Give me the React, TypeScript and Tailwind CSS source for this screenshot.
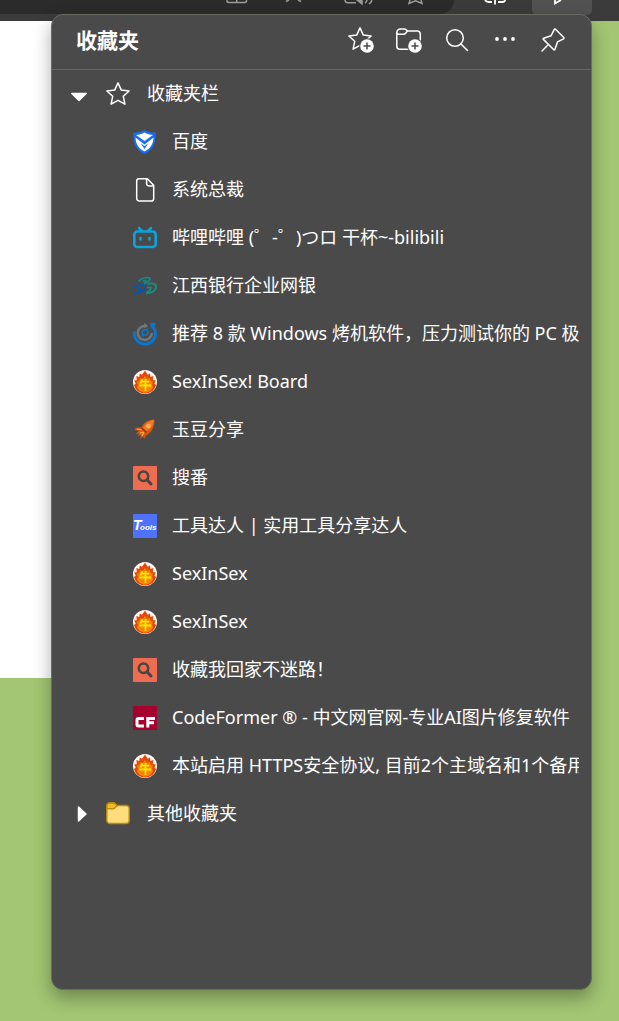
import type { ReactNode } from "react";

const stroke = {
  fill: "none",
  stroke: "#fff",
  strokeWidth: 1.5,
  strokeLinejoin: "round" as const,
  strokeLinecap: "round" as const,
};

function Svg({ children, className = "size-6" }: { children: ReactNode; className?: string }) {
  return (
    <svg viewBox="0 0 24 24" className={`${className} block shrink-0`} aria-hidden="true">
      {children}
    </svg>
  );
}

const STAR = "M12 .9l3.3 7.2 7.8.9-5.8 5.3 1.6 7.9L12 18.3l-6.9 3.9 1.6-7.9L.9 9l7.8-.9z";

const Star = () => (
  <Svg>
    <path d={STAR} {...stroke} />
  </Svg>
);

function PlusBadge() {
  return (
    <>
      <circle cx="19" cy="19" r="7.8" fill="#4a4a4a" />
      <circle cx="19" cy="19" r="6.8" fill="#fff" />
      <path d="M19 15.500v7M15.500 19h7" stroke="#4a4a4a" strokeWidth="1.500" />
    </>
  );
}

const AddStar = () => (
  <svg viewBox="0 0 26 26" className="block size-[26px] shrink-0" aria-hidden="true">
    <path d={STAR} {...stroke} />
    <PlusBadge />
  </svg>
);

const AddFolder = () => (
  <svg viewBox="0 0 26 26" className="block size-[26px] shrink-0" aria-hidden="true">
    <path
      d="M.8 5.500A3.500 3.500 0 0 1 4.300 2h4.200c1.500 0 2.300 2 3.500 2h9.300a3 3 0 0 1 3 3v12.300a3 3 0 0 1-3 3H3.800a3 3 0 0 1-3-3zM.9 5.500c0 1 1 1.800 2 1.800h5.200c1.800 0 2.400-3.300 3.900-3.300"
      {...stroke}
    />
    <PlusBadge />
  </svg>
);

const Search = () => (
  <Svg>
    <circle cx="10" cy="10" r="8.300" {...stroke} />
    <path d="M16 16l6.500 6.500" {...stroke} />
  </Svg>
);

const More = () => (
  <Svg>
    <g fill="#fff">
      <circle cx="4" cy="11" r="1.900" />
      <circle cx="12" cy="11" r="1.900" />
      <circle cx="20" cy="11" r="1.900" />
    </g>
  </Svg>
);

const Pin = () => (
  <Svg>
    <path
      d="M14.500 1.200l8.300 8.300c.4.500.3 1-.2 1.300l-6.100 3.100-2.600 7.600c-.2.500-.7.600-1.100.2L2.400 11.400c-.4-.4-.3-.9.2-1.100l7.500-2.600 3.100-6.100c.3-.6.9-.8 1.300-.4zM7.400 16.500L1 23"
      {...stroke}
    />
  </Svg>
);

const Shield = () => (
  <Svg>
    <path d="M11.500 0C8 2 4 2.500.3 2.500c0 9 .8 17 11.200 21.500 10-4.500 11.200-12.500 11.200-21.500C19 2.500 15 2 11.500 0z" fill="#1a6df0" />
    <path d="M11.500 2.500C9 4.300 6 4.800 3 5l8.500 6L20 5c-3-.2-6-.7-8.500-2.500z" fill="#fff" />
    <path d="M2.500 7.500l9 7 9-7c-.2 6.500-3 11-9 14-6-3-8.800-7.500-9-14z" fill="#fff" />
    <path d="M7.500 13l4 3.200 4-3.200-4 6z" fill="#1a6df0" />
  </Svg>
);

const Doc = () => (
  <Svg>
    <path
      d="M6 .8h8.300L20.700 7.300v13.200a2.600 2.600 0 0 1-2.600 2.600H6.300a2.600 2.600 0 0 1-2.600-2.600V3.200A2.400 2.400 0 0 1 6 .8zM13.600 1v4.600a2.300 2.300 0 0 0 2.300 2.300h4.600"
      {...stroke}
    />
  </Svg>
);

const Bili = () => (
  <Svg>
    <g fill="none" stroke="#0fa3dc" strokeLinecap="round">
      <path d="M6 2l3 3M18 2l-3 3" strokeWidth="2.500" />
      <rect x="1.300" y="5.500" width="21.400" height="15.500" rx="3" strokeWidth="2.600" />
      <path d="M7.500 12v1.500M16.500 12v1.500" strokeWidth="2.500" />
    </g>
  </Svg>
);

const Bank = () => (
  <Svg>
    <g fill="none">
      <path d="M5.500 7.500C8 4.500 14 2.500 16.500 4c1.500 1.500-1 4-4.500 5" stroke="#158e86" strokeWidth="1.600" />
      <path d="M9.500 7h3.500l-2 3.500H8" stroke="#158e86" strokeWidth="1.500" />
      <path d="M14.500 10.500c4-2 8.500-1 8.500 2.500s-4.500 6.500-10 6.500" stroke="#158e86" strokeWidth="1.800" />
      <path d="M14 13.500h4c0 2.500-2 4-4.500 4.500" stroke="#158e86" strokeWidth="1.600" />
      <path d="M1 13.500C4 10.500 11 9.500 12 12.500c1 3.500-4 7-11 7" stroke="#0b55a4" strokeWidth="1.800" />
      <path d="M4 14h4c0 2-2 3.500-4.500 4" stroke="#0b55a4" strokeWidth="1.600" />
    </g>
  </Svg>
);

const Swirl = () => (
  <Svg>
    <path d="M1.600 9.500A10.500 10.500 0 1 0 20.500 5.500" fill="none" stroke="#0877cf" strokeWidth="3" />
    <path d="M17.500.800h5v1.500l-2.300 4.200-2.700-1.200z" fill="#0877cf" />
    <path d="M12 4A7 7 0 1 0 18.800 11" fill="none" stroke="#767676" strokeWidth="2.500" />
    <path d="M11 1l4 2.700-3.500 2.800z" fill="#767676" />
    <circle cx="12" cy="10.500" r="2.800" fill="none" stroke="#0877cf" strokeWidth="1.500" />
    <path d="M13.500 6.500l1.500 2.500M10.500 14.500L9 12" stroke="#0877cf" strokeWidth="1.500" />
  </Svg>
);

const Fire = () => (
  <Svg>
    <circle cx="12" cy="12" r="12" fill="#fffaf5" />
    <path
      d="M12 .5l2.800 4.200 2.200-1.200.5 3.500 3-1-.6 4 3 .5-1.500 3 1.600 1.500c-1 4.500-5 8.500-11 8.500S2 19.500 1 15l1.700-1.500-1.500-3 2.800-.5-.8-4 3 1 .5-3.500 2.300 1.200z"
      fill="#e24a05"
    />
    <path
      d="M12 6l2.500 3 2.500-1 .5 3 2.500.5-1 3.500 1 2c-1 3-4 5.500-8 5.500S5 20 4 17l1-2-1-3.500 2.500-.5.500-3 2.500 1z"
      fill="#fb8206"
    />
    <path d="M9.400 9.500l-1.900 4M8.800 11.700h7.500M6.200 15.500h12M12.500 9V21" fill="none" stroke="#ffe900" strokeWidth="1.800" />
  </Svg>
);

const Rocket = () => (
  <Svg>
    <path
      d="M21.300 1.500C15 2 10 5 8.500 9.500L3 9.700 1.500 12l4.500 1-3.500 3 3.500-.5L5 18l3-1-1 4 3-3 1 3 2-3.500c6-2.500 9-10 8.300-16z"
      fill="#d85810"
    />
    <path d="M21 2c-5 .5-9 4-11 8l3.500 3C18 11 20.500 7 21 2z" fill="#f47b20" />
    <circle cx="15.500" cy="8" r="2.300" fill="#ffb34b" />
    <path d="M4 11l5 1M7 15l4-1M9 18l2-4" stroke="#ffad47" strokeWidth="1.100" />
    <path d="M8.500 10l5 4.500" stroke="#87391e" strokeWidth="1.300" />
  </Svg>
);

const Find = () => (
  <Svg>
    <rect width="24" height="24" rx="1" fill="#ed6d50" />
    <circle cx="10.500" cy="10.300" r="4.700" fill="none" stroke="#4a4443" strokeWidth="2.500" />
    <path d="M14.200 14l3.800 4" stroke="#4a4443" strokeWidth="3" strokeLinecap="round" />
  </Svg>
);

const Tools = () => (
  <Svg>
    <rect width="24" height="24" rx="1" fill="#4f71ff" />
    <g fill="#fff" fontFamily="Liberation Sans, sans-serif" fontStyle="italic" fontWeight="700">
      <text x="0" y="16" fontSize="14">T</text>
      <text x="7" y="16" fontSize="8">ools</text>
    </g>
  </Svg>
);

const CF = () => (
  <Svg>
    <rect width="24" height="24" fill="#a5002e" />
    <path
      d="M11 12.500H5.500q-1.500 0-1.500 1.500v4.500q0 1.500 1.500 1.500H11M14.800 21.500v-9H22M15 16.800h6"
      fill="none"
      stroke="#fff"
      strokeWidth="3"
    />
  </Svg>
);

const Folder = () => (
  <Svg>
    <path
      d="M.8 4A3 3 0 0 1 3.800 1h4.400l2.800 2.500h9.200a3 3 0 0 1 3 3v12a3 3 0 0 1-3 3H3.800a3 3 0 0 1-3-3z"
      fill="#ffdc7c"
      stroke="#b98a0c"
      strokeWidth="1.400"
    />
    <path
      d="M.9 6.600V4A3 3 0 0 1 3.800 1h4.400L11 3.500 9 5.800q-.8.900-2 .9z"
      fill="#f1bd2c"
      stroke="#b98a0c"
      strokeWidth="1.400"
    />
  </Svg>
);

const bookmarks: { label: string; icon: () => ReactNode }[] = [
  { label: "百度", icon: Shield },
  { label: "系统总裁", icon: Doc },
  { label: "哔哩哔哩 (゜-゜)つロ 干杯~-bilibili", icon: Bili },
  { label: "江西银行企业网银", icon: Bank },
  { label: "推荐 8 款 Windows 烤机软件，压力测试你的 PC 极限", icon: Swirl },
  { label: "SexInSex! Board", icon: Fire },
  { label: "玉豆分享", icon: Rocket },
  { label: "搜番", icon: Find },
  { label: "工具达人 | 实用工具分享达人", icon: Tools },
  { label: "SexInSex", icon: Fire },
  { label: "SexInSex", icon: Fire },
  { label: "收藏我回家不迷路！", icon: Find },
  { label: "CodeFormer ® - 中文网官网-专业AI图片修复软件", icon: CF },
  { label: "本站启用 HTTPS安全协议, 目前2个主域名和1个备用域名", icon: Fire },
];

const actions = [
  { label: "添加收藏", icon: AddStar },
  { label: "添加文件夹", icon: AddFolder },
  { label: "搜索收藏夹", icon: Search },
  { label: "更多选项", icon: More },
  { label: "固定收藏夹", icon: Pin },
];

function FolderRow({ label, open, icon }: { label: string; open: boolean; icon: ReactNode }) {
  return (
    <button type="button" aria-expanded={open} className="flex h-12 w-full items-center pl-[15px] pr-3 text-left">
      <svg viewBox="0 0 24 24" className="mr-[15px] block size-6 shrink-0" aria-hidden="true">
        <path
          d={open ? "M4.800 11.500h14.400L12 18.500z" : "M11.500 5v14l7.500-7z"}
          fill="#fff"
          stroke="#fff"
          strokeLinejoin="round"
          strokeWidth="1.500"
        />
      </svg>
      {icon}
      <span className="ml-[17px] truncate pb-0.5">{label}</span>
    </button>
  );
}

function BrowserBar() {
  return (
    <header className="flex h-[21px] items-start justify-between bg-[#3b3b3b]">
      <div className="flex h-[14px] w-[454px] justify-end rounded-br-[20px] bg-[#2b2b2b]">
        <svg
          viewBox="0 0 230 14"
          className="h-[14px] w-[230px]"
          fill="none"
          stroke="#9a9a9a"
          strokeWidth="1.500"
          aria-hidden="true"
        >
          <path d="M3 0v1q0 1.500 2 1.500h16q1.500 0 1.500-1.500V0M12.700 0v2.500M62 1.500L65 0M77 1.500L74 0M121 0q0 2.800 3 2.800h8M186 0l-1 3.500 6.500-2.700 6.500 2.700L197 0" />
          <path d="M133 0l5 4V0z" fill="#9a9a9a" />
          <path d="M141 3q2-1 2-4M145 4q3-2 3-5" />
        </svg>
      </div>
      <svg viewBox="0 0 112 20" className="mr-[27px] h-5 w-[112px]" aria-hidden="true">
        <rect x="52" y="-6" width="60" height="21" rx="5" fill="#525252" />
        <path d="M5 0q1 2 4 2h3M15 0v4.500M18 2h4q3 0 3-2M75 0v3.500l6-3.500" fill="none" stroke="#fff" strokeWidth="1.800" />
      </svg>
    </header>
  );
}

export default function App() {
  return (
    <div className="flex min-h-screen flex-col overflow-hidden bg-[#a2c673] font-['Noto_Sans','Noto_Sans_CJK_SC',sans-serif] text-lg leading-6 text-white">
      <BrowserBar />
      <main className="grid flex-1 grid-cols-1">
        <div className="col-start-1 row-start-1 h-[657px] w-1/2 bg-white" />
        <section
          aria-labelledby="favorites-title"
          className="z-10 col-start-1 row-start-1 -mt-[7px] mb-[31px] ml-[51px] mr-[27px] flex min-w-0 flex-col rounded-xl border border-[#686c63] bg-[#4a4a4a] shadow-[0_8px_18px_rgba(0,0,0,0.32)]"
        >
          <div className="flex h-[55px] items-center justify-between border-b border-[#666] pb-1 pl-6 pr-[26px]">
            <h1 id="favorites-title" className="text-[21px] font-bold leading-7">
              收藏夹
            </h1>
            <div className="flex gap-6">
              {actions.map(({ label, icon: Icon }) => (
                <button key={label} type="button" aria-label={label} className="flex size-6 items-center justify-center">
                  <Icon />
                </button>
              ))}
            </div>
          </div>
          <nav>
            <FolderRow label="收藏夹栏" open icon={<Star />} />
            <ul>
              {bookmarks.map(({ label, icon: Icon }, i) => (
                <li key={i}>
                  <a href="#" className="flex h-12 items-center gap-[15px] pl-[81px] pr-3">
                    <Icon />
                    <span className="min-w-0 overflow-hidden whitespace-nowrap pb-0.5">{label}</span>
                  </a>
                </li>
              ))}
            </ul>
            <FolderRow label="其他收藏夹" open={false} icon={<Folder />} />
          </nav>
        </section>
      </main>
    </div>
  );
}
